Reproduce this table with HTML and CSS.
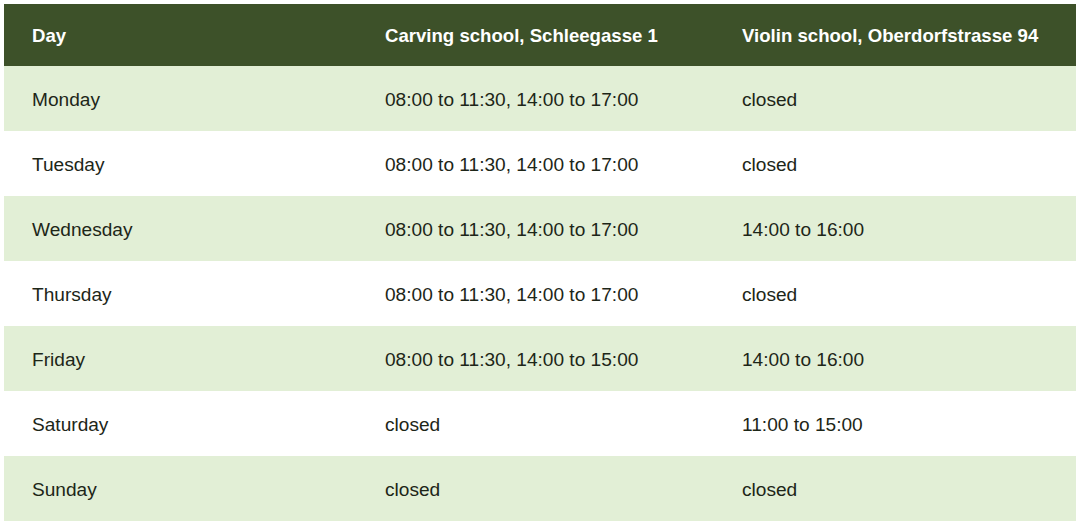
FILE: index.html
```html
<!DOCTYPE html>
<html>
<head>
<meta charset="utf-8">
<link rel="stylesheet" href="styles.css">
</head>
<body>
<table class="hours">
  <colgroup>
    <col class="c1"><col class="c2"><col class="c3">
  </colgroup>
  <thead>
    <tr><th>Day</th><th>Carving school, Schleegasse 1</th><th>Violin school, Oberdorfstrasse 94</th></tr>
  </thead>
  <tbody>
    <tr><td>Monday</td><td>08:00 to 11:30, 14:00 to 17:00</td><td>closed</td></tr>
    <tr><td>Tuesday</td><td>08:00 to 11:30, 14:00 to 17:00</td><td>closed</td></tr>
    <tr><td>Wednesday</td><td>08:00 to 11:30, 14:00 to 17:00</td><td>14:00 to 16:00</td></tr>
    <tr><td>Thursday</td><td>08:00 to 11:30, 14:00 to 17:00</td><td>closed</td></tr>
    <tr><td>Friday</td><td>08:00 to 11:30, 14:00 to 15:00</td><td>14:00 to 16:00</td></tr>
    <tr><td>Saturday</td><td>closed</td><td>11:00 to 15:00</td></tr>
    <tr><td>Sunday</td><td>closed</td><td>closed</td></tr>
  </tbody>
</table>
</body>
</html>
```
FILE: styles.css
```css
html, body { margin: 0; padding: 0; background: #ffffff; }
body { padding: 4px; }
.hours {
  width: 1072px;
  border-collapse: collapse;
  table-layout: fixed;
  font-family: "Liberation Sans", Arial, sans-serif;
  font-size: 19.1px;
  color: #1d2618;
}
.c1 { width: 353px; }
.c2 { width: 357px; }
.c3 { width: 362px; }
.hours th {
  background: #3d5129;
  color: #ffffff;
  font-weight: bold;
  font-size: 18.6px;
  text-align: left;
  height: 62px;
  padding: 2px 0 0 28px;
  box-sizing: border-box;
}
.hours td {
  height: 65px;
  padding: 2px 0 0 28px;
  box-sizing: border-box;
}
.hours tbody tr:nth-child(odd) td { background: #e2efd6; }
```
